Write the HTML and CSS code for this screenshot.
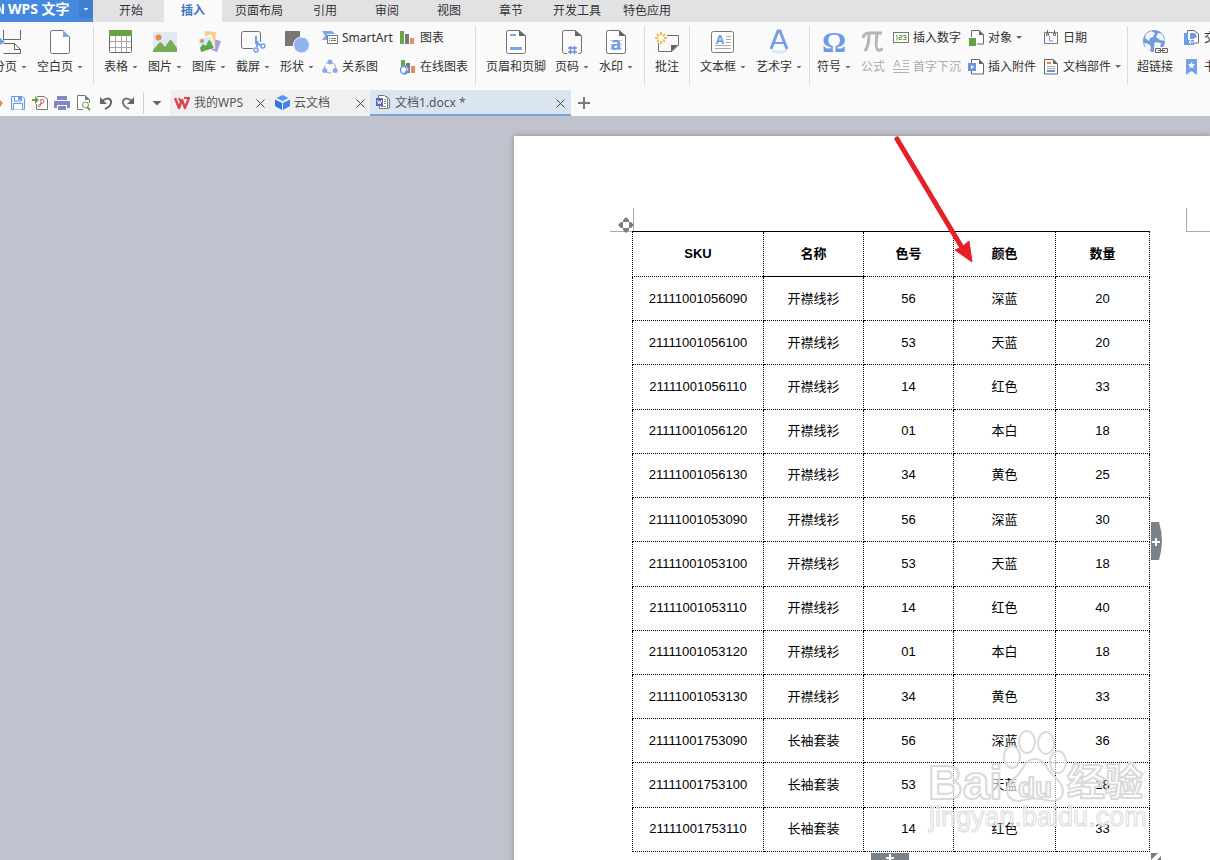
FILE: index.html
```html
<!DOCTYPE html>
<html lang="zh-CN">
<head>
<meta charset="utf-8">
<title>文档1.docx - WPS 文字</title>
<link rel="stylesheet" href="styles.css">
</head>
<body>
<div class="app">
  <header class="menu-bar">
    <button class="app-button"><svg class="app-logo" width="4" height="12" viewBox="0 0 4 12"><path d="M0 3l2 6V1h2v10H2L0 7z" fill="#fff"/></svg><span class="app-name">WPS 文字</span><span class="app-drop"><span class="caret caret-light"></span></span></button>
    <nav class="menu-tabs">
      <button class="menu-tab">开始</button>
      <button class="menu-tab is-active">插入</button>
      <button class="menu-tab">页面布局</button>
      <button class="menu-tab">引用</button>
      <button class="menu-tab">审阅</button>
      <button class="menu-tab">视图</button>
      <button class="menu-tab">章节</button>
      <button class="menu-tab">开发工具</button>
      <button class="menu-tab">特色应用</button>
    </nav>
  </header>

  <div class="ribbon">
    <section class="group group-pages">
      <button class="big"><svg class="icon" viewBox="0 0 28 28" fill="none" stroke="#666"><path d="M7.500 2V11.500H24.500V2M7.500 15.500H18.500L24.500 21.500V25.500H7.500M18.500 15.500V21.500H24.500"/><path d="M1 8l8 5.500L1 19z" fill="#6f9de8" stroke="none"/></svg><span class="label">分页<span class="caret"></span></span></button>
      <button class="big wide"><svg class="icon" viewBox="0 0 28 28"><path d="M17 2.500H6.500q-2 0-2 2v19q0 2 2 2h15q2 0 2-2V9" fill="#fff" stroke="#707070"/><path d="M17 2v7h7z" fill="#7ba3ea"/></svg><span class="label">空白页<span class="caret"></span></span></button>
    </section>

    <section class="group group-media">
      <button class="big"><svg class="icon" viewBox="0 0 28 28"><rect x="2.500" y="2.500" width="22" height="22" rx="1" fill="#fff" stroke="#666"/><path d="M2 2h23v6H2z" fill="#65a346"/><path d="M3 13.500h21M3 19.500h21M8.500 8v16M14.500 8v16M19.500 8v16" stroke="#a8a8a8"/></svg><span class="label">表格<span class="caret"></span></span></button>
      <button class="big"><svg class="icon" viewBox="0 0 28 28"><path d="M2 4h24v20H2z" fill="#e1e8ef"/><circle cx="7.500" cy="9.500" r="3" fill="#ec8a4b"/><path d="M2 24v-2l6-7q1.500-1.500 3 0l3 4 4-6q1.500-2 3 0l5 7v4z" fill="#77ae55"/></svg><span class="label">图片<span class="caret"></span></span></button>
      <button class="big"><svg class="icon" viewBox="0 0 28 28"><path d="M18 11l8 2-4 11-8-3z" fill="#a99be0"/><path d="M10 3l11 1-1 14-11-1z" fill="#f5cf85"/><path d="M2 11l14-4 4 13-14 4z" fill="#d7edfb" stroke="#fff"/><circle cx="7" cy="13" r="2" fill="#ed8c4c"/><path d="M5 20l3-4 3 2 2-5q2-2 3 1l3 6-13 4z" fill="#62a747"/></svg><span class="label">图库<span class="caret"></span></span></button>
      <button class="big"><svg class="icon" viewBox="0 0 28 28" fill="none"><path d="M14 20.500H4.500q-2 0-2-2v-13q0-2 2-2h15q2 0 2 2V14" stroke="#707070"/><path d="M17 8v7l5 2M18.500 13l-.5 6" stroke="#72a0e8" stroke-width="2"/><circle cx="17" cy="22" r="2" stroke="#72a0e8" stroke-width="1.500"/><circle cx="24" cy="18" r="2" stroke="#72a0e8" stroke-width="1.500"/></svg><span class="label">截屏<span class="caret"></span></span></button>
      <button class="big"><svg class="icon" viewBox="0 0 28 28"><path d="M2 3h15v15H2z" fill="#777"/><circle cx="18.500" cy="17" r="8" fill="#8fb4ee" stroke="#fafafa"/></svg><span class="label">形状<span class="caret"></span></span></button>
      <div class="stack">
        <button class="small"><svg class="icon-s" viewBox="0 0 16 16"><path d="M0 1h10l3 3H5v6H0l3-4z" fill="#7fa8e8"/><rect x="5.500" y="5.500" width="10" height="8" fill="#fff" stroke="#777"/><path d="M7 8.500h1M9 8.500h5M7 10.500h1M9 10.500h5" stroke="#777"/></svg>SmartArt</button>
        <button class="small"><svg class="icon-s" viewBox="0 0 16 16"><circle cx="8" cy="8.500" r="5.500" fill="none" stroke="#999" stroke-dasharray="5 2"/><circle cx="8" cy="3" r="2.500" fill="#82aaf0"/><circle cx="2.800" cy="11.500" r="2.500" fill="#82aaf0"/><circle cx="13.200" cy="11.500" r="2.500" fill="#82aaf0"/></svg>关系图</button>
      </div>
      <div class="stack">
        <button class="small"><svg class="icon-s" viewBox="0 0 16 16"><path d="M0 1h4v13H0z" fill="#69a34b"/><path d="M5 4h4v10H5z" fill="#777"/><path d="M10 8h4v6h-4z" fill="#ea8b57"/></svg>图表</button>
        <button class="small"><svg class="icon-s" viewBox="0 0 16 16"><path d="M1 1h4v8H1z" fill="#69a34b"/><path d="M6 4h4v10H6z" fill="#777"/><path d="M11 7h4v7h-4z" fill="#ea8b57"/><circle cx="4.500" cy="11" r="4" fill="#fff" stroke="#6495df" stroke-width="1.500"/><path d="M2 8q5 0 4 4l-2 1 1 2 3-2-2-5z" fill="#6495df"/></svg>在线图表</button>
      </div>
    </section>

    <section class="group group-header">
      <button class="big wider"><svg class="icon" viewBox="0 0 28 28"><path d="M17 2.500H6.500q-2 0-2 2v19q0 2 2 2h15q2 0 2-2V8z" fill="#fff" stroke="#707070"/><path d="M17 2v6h7z" fill="#666"/><path d="M8 6h6v2H8zM8 19h12v3H8z" fill="#7ba7e8"/></svg><span class="label">页眉和页脚</span></button>
      <button class="big"><svg class="icon" viewBox="0 0 28 28"><path d="M9 25.500H6.500q-2 0-2-2v-19q0-2 2-2H17L23.500 8v15.500q0 2-2 2H20" fill="none" stroke="#707070"/><path d="M17 2v6h7z" fill="#666"/><path d="M12.500 18v8M16.500 18v8M10 20h9M10 24h9" stroke="#668fe0" stroke-width="1.500"/></svg><span class="label">页码<span class="caret"></span></span></button>
      <button class="big"><svg class="icon" viewBox="0 0 28 28"><path d="M17 2.500H6.500q-2 0-2 2v19q0 2 2 2h15q2 0 2-2V8z" fill="#fff" stroke="#707070"/><path d="M17 2v6h7z" fill="#666"/><path d="M8 12.500h12M8 16.500h12M8 20.500h12" stroke="#aac6f2"/><text x="14" y="22" text-anchor="middle" class="glyph glyph-a">a</text></svg><span class="label">水印<span class="caret"></span></span></button>
    </section>

    <section class="group">
      <button class="big"><svg class="icon" viewBox="0 0 28 28"><path d="M14 7.500H25.500V17L19 23.500H5.500V15" fill="none" stroke="#707070"/><path d="M18 24v-7h7z" fill="#666"/><path d="M8 4v3M8 13v3M2 10h3M11 10h3M4 6l2 2M10 12l2 2M4 14l2-2M10 8l2-2" stroke="#f1bf4d" stroke-width="2"/></svg><span class="label">批注</span></button>
    </section>

    <section class="group group-text">
      <button class="big wide"><svg class="icon" viewBox="0 0 28 28"><rect x="2.500" y="3.500" width="22" height="21" rx="2" fill="#fff" stroke="#777"/><path d="M17 8.500h5M17 11.500h5M17 14.500h5M6 17.500h16M6 20.500h16" stroke="#aaa"/><text x="11" y="16" text-anchor="middle" class="glyph glyph-box">A</text></svg><span class="label">文本框<span class="caret"></span></span></button>
      <button class="big wide"><svg class="icon" viewBox="0 0 28 28"><path d="M6 21l7-18h2l7 18" fill="none" stroke="#759fe9" stroke-width="3"/><path d="M9 15h11" stroke="#759fe9" stroke-width="2"/><path d="M7 22q7 5 15 0" fill="none" stroke="#dbe7fc" stroke-width="3"/></svg><span class="label">艺术字<span class="caret"></span></span></button>
    </section>

    <section class="group group-symbol">
      <button class="big"><svg class="icon" viewBox="0 0 28 28"><text x="14" y="24" text-anchor="middle" class="glyph glyph-omega">Ω</text></svg><span class="label">符号<span class="caret"></span></span></button>
      <button class="big narrow" disabled><svg class="icon" viewBox="0 0 28 28"><path d="M4 10q1-5 6-5h13M10 6q0 12-4 17M18 6q-2 15 1 16 3 1 4-2" fill="none" stroke="#b5b5b5" stroke-width="3"/></svg><span class="label">公式</span></button>
      <div class="stack">
        <button class="small"><svg class="icon-s" viewBox="0 0 16 16"><rect x=".5" y="2.500" width="15" height="10" fill="#fff" stroke="#777"/><path d="M3 5.500h1v5M6 5.500h3v2H6v2h3M10 5.500h3v4h-3M11 7.500h2" fill="none" stroke="#69a34b"/></svg>插入数字</button>
        <button class="small" disabled><svg class="icon-s" viewBox="0 0 16 16" fill="none" stroke="#b3b3b3"><path d="M10 1.500h6M10 4.500h6M10 7.500h6M0 10.500h16M0 13.500h16M1 8l3-7 3 7M2 6h4"/></svg>首字下沉</button>
      </div>
      <div class="stack">
        <button class="small"><svg class="icon-s" viewBox="0 0 16 16"><path d="M3.500 7V.5H11L15.500 5v9H9" fill="#fff" stroke="#666"/><path d="M11 0v5h5z" fill="#666"/><path d="M1 8h7v8H1z" fill="#61a342"/></svg>对象<span class="caret"></span></button>
        <button class="small"><svg class="icon-s" viewBox="0 0 16 16"><path d="M3.500 4V.5H11L15.500 5v10h-12v-3" fill="#fff" stroke="#666"/><path d="M11 0v5h5z" fill="#666"/><path d="M0 4h8v8H0z" fill="#6796df"/><path d="M3 6l3 2-3 2z" fill="#fff"/></svg>插入附件</button>
      </div>
      <div class="stack">
        <button class="small"><svg class="icon-s" viewBox="0 0 16 16"><path d="M1.500 2.500h2v3h2v-3h5v3h2v-3h2v11h-13z" fill="#fff" stroke="#777"/><path d="M4.500 0v4M11.500 0v4" stroke="#666"/><path d="M6.500 6v5h4" fill="none" stroke="#6897df"/></svg>日期</button>
        <button class="small"><svg class="icon-s" viewBox="0 0 16 16"><path d="M1.500.5H10L14.500 5v10h-13z" fill="#fff" stroke="#666"/><path d="M10 0v5h5z" fill="#666"/><path d="M4 3h4v2H4z" fill="#e98951"/><path d="M4 7.500h8M4 9.500h8" stroke="#aaa"/><path d="M4 11h8v2H4z" fill="#668fe0"/></svg>文档部件<span class="caret"></span></button>
      </div>
    </section>

    <section class="group group-links">
      <button class="big link"><svg class="icon" viewBox="0 0 28 28"><circle cx="13" cy="13" r="11" fill="#719bd9"/><path d="M5 6l5-3 4 2-2 4-3 1-1 3-4-3zM17 5l4 1 3 7-5-1-4-3zM3 15l5 1 2 3-1 5-4-3zM14 14l6 1-1 5-4 2-2-4z" fill="#f1f6fc"/><path d="M13 19h14v8H13z" fill="#fafafa"/><path d="M14.500 20.500h5v4h-5zM21.500 20.500h5v4h-5zM17 22.500h7" fill="none" stroke="#666"/></svg><span class="label">超链接</span></button>
      <div class="stack">
        <button class="small"><svg class="icon-s" viewBox="0 0 16 16"><path d="M3.500.5H10L14.500 4v9h-11z" fill="#fff" stroke="#666"/><path d="M0 3h4v7h6v5H0z" fill="#6f9bea"/><path d="M6 3h5l2 4-4 2H6z" fill="#6f9bea"/><path d="M10 12H5m2-2l-2 2 2 2" fill="none" stroke="#fff"/></svg>交叉引用</button>
        <button class="small"><svg class="icon-s" viewBox="0 0 16 16"><path d="M2 1q0-1 1-1h9q1 0 1 1v15l-5.500-4L2 16z" fill="#759eea"/><path d="M7.500 3l1 2 2.500.2-2 1.700.7 2.500-2.200-1.300-2.200 1.300.7-2.500-2-1.700L6.500 5z" fill="#fff"/></svg>书签</button>
      </div>
    </section>
  </div>

  <div class="doc-bar">
    <div class="quick">
      <button class="quick-first" aria-label="打开"><svg width="7" height="16" viewBox="0 0 7 16"><path d="M0 5l3 3-3 4z" fill="#ea8a41"/></svg></button>
      <button class="quick-button" aria-label="保存"><svg class="icon-s" viewBox="0 0 16 16"><path d="M1.500 1.500h11l2 2v11h-13z" fill="#e8f0fd" stroke="#6d99e3"/><path d="M4.500 2v4h7V2M3.500 14.500v-6h9v6" fill="#fff" stroke="#6d99e3"/><path d="M8 2h3v3H8z" fill="#6d99e3"/></svg></button>
      <button class="quick-button" aria-label="输出为PDF"><svg class="icon-s" viewBox="0 0 16 16"><path d="M4.500 9v5.500h11V4L12 1.500H5" fill="#fff" stroke="#777"/><path d="M0 4h3V1l4 4-4 4V6H0z" fill="#68a149"/><path d="M8 5q4-2 4 1t-4 3q-3 2-1 3 2 0 2-7" fill="none" stroke="#d75b5b"/></svg></button>
      <button class="quick-button" aria-label="打印"><svg class="icon-s" viewBox="0 0 16 16"><path d="M3 1h10v4H3zM0 6h16v7h-3v-3H3v3H0zM4 11h8v4H4z" fill="#8487be"/></svg></button>
      <button class="quick-button" aria-label="打印预览"><svg class="icon-s" viewBox="0 0 16 16"><path d="M7 14.500H1.500V.5H9L13.500 5v3" fill="#fff" stroke="#777"/><path d="M9 0v5h5z" fill="#777"/><circle cx="9.500" cy="10" r="3" fill="none" stroke="#68a149"/><path d="M11 12l3 3" stroke="#68a149" stroke-width="2"/></svg></button>
      <button class="quick-button" aria-label="撤销"><svg class="icon-s" viewBox="0 0 16 16"><path d="M4 6q7-5 9 0 1 5-6 8" fill="none" stroke="#666" stroke-width="2"/><path d="M2 2v7h7z" fill="#666"/></svg></button>
      <button class="quick-button" aria-label="恢复"><svg class="icon-s" viewBox="0 0 16 16"><path d="M12 6Q5 1 3 6q-1 5 6 8" fill="none" stroke="#777" stroke-width="2"/><path d="M14 2v7H7z" fill="#666"/></svg></button>
      <button class="quick-more" aria-label="自定义"><span class="caret caret-large"></span></button>
    </div>
    <div class="doc-tab"><svg class="icon-s" viewBox="0 0 16 16"><path d="M1 3l4 10L8 5l3 8 4-10" fill="none" stroke="#d84850" stroke-width="2.500" stroke-linejoin="round"/><path d="M5 3l2 5M10 3h6" stroke="#d84850" stroke-width="2"/></svg><span class="doc-name">我的WPS</span><button class="close" aria-label="关闭"><svg width="9" height="9" viewBox="0 0 9 9"><path d="M.5.5l8 8M8.500.5l-8 8" stroke="#444"/></svg></button></div>
    <div class="doc-tab"><svg class="icon-s" viewBox="0 0 16 16"><path d="M8.500 0l6 3-6 3-6-3z" fill="#5794f3"/><path d="M1 4.500l7 3.500v7l-7-4z" fill="#3775e5"/><path d="M16 4.500L9 8v7l7-4z" fill="#4483ec"/></svg><span class="doc-name">云文档</span><button class="close" aria-label="关闭"><svg width="9" height="9" viewBox="0 0 9 9"><path d="M.5.5l8 8M8.500.5l-8 8" stroke="#444"/></svg></button></div>
    <div class="doc-tab is-current"><svg class="icon-s" viewBox="0 0 16 16"><path d="M5.500 3V1.500h6L14.500 4v9h-4" fill="#eef3f9" stroke="#777"/><path d="M3.500 3V.5h6l3 3v10h-8V11" fill="#fff" stroke="#777"/><path d="M9 4.500h2M9 6.500h2M9 8.500h2M6 11.500h5" stroke="#888"/><path d="M1 3h7v8H1z" fill="#5666b1"/><path d="M2.500 5l1 4 1-3 1 3 1-4" fill="none" stroke="#fff"/></svg><span class="doc-name">文档1.docx *</span><button class="close" aria-label="关闭"><svg width="9" height="9" viewBox="0 0 9 9"><path d="M.5.5l8 8M8.500.5l-8 8" stroke="#444"/></svg></button></div>
    <button class="new-tab" aria-label="新建"><svg width="12" height="12" viewBox="0 0 12 12"><path d="M6 0v12M0 6h12" stroke="#777" stroke-width="2"/></svg></button>
  </div>

  <main class="workspace">
    <article class="page">
      <span class="crop-mark crop-left"></span>
      <span class="crop-mark crop-right"></span>
      <div class="table-wrap">
        <svg class="move-handle" width="16" height="16" viewBox="0 0 16 16"><path d="M8 0l3 3v2H5V3zM8 16l3-3v-2H5v2zM0 8l3-3h2v6H3zM16 8l-3-3h-2v6h2z" fill="#757c82"/></svg>
        <table class="stock">
          <colgroup><col class="c-sku"><col class="c-name"><col class="c-code"><col class="c-color"><col class="c-qty"></colgroup>
          <thead><tr><th>SKU</th><th class="underlined">名称</th><th>色号</th><th>颜色</th><th>数量</th></tr></thead>
          <tbody>
            <tr><td>21111001056090</td><td>开襟线衫</td><td>56</td><td>深蓝</td><td>20</td></tr>
            <tr><td>21111001056100</td><td>开襟线衫</td><td>53</td><td>天蓝</td><td>20</td></tr>
            <tr><td>21111001056110</td><td>开襟线衫</td><td>14</td><td>红色</td><td>33</td></tr>
            <tr><td>21111001056120</td><td>开襟线衫</td><td>01</td><td>本白</td><td>18</td></tr>
            <tr><td>21111001056130</td><td>开襟线衫</td><td>34</td><td>黄色</td><td>25</td></tr>
            <tr><td>21111001053090</td><td>开襟线衫</td><td>56</td><td>深蓝</td><td>30</td></tr>
            <tr><td>21111001053100</td><td>开襟线衫</td><td>53</td><td>天蓝</td><td>18</td></tr>
            <tr><td>21111001053110</td><td>开襟线衫</td><td>14</td><td>红色</td><td>40</td></tr>
            <tr><td>21111001053120</td><td>开襟线衫</td><td>01</td><td>本白</td><td>18</td></tr>
            <tr><td>21111001053130</td><td>开襟线衫</td><td>34</td><td>黄色</td><td>33</td></tr>
            <tr><td>21111001753090</td><td>长袖套装</td><td>56</td><td>深蓝</td><td>36</td></tr>
            <tr><td>21111001753100</td><td>长袖套装</td><td>53</td><td>天蓝</td><td>18</td></tr>
            <tr><td>21111001753110</td><td>长袖套装</td><td>14</td><td>红色</td><td>33</td></tr>
          </tbody>
        </table>
        <svg class="add-column" width="12" height="38" viewBox="0 0 12 38"><path d="M0 0h8q3 10 3 19t-3 19H0z" fill="#7a828a"/><path d="M1 20h8M5 16v8" stroke="#fff" stroke-width="2"/></svg>
        <svg class="add-row" width="38" height="12" viewBox="0 0 38 12"><path d="M0 0h38v8q-10 3-19 3T0 8z" fill="#7a828a"/><path d="M15 5h8M19 1v8" stroke="#fff" stroke-width="2"/></svg>
        <svg class="resize-handle" width="10" height="10" viewBox="0 0 10 10"><path d="M0 0h7L0 7zM10 3v7H3z" fill="#757c82"/></svg>
      </div>
      <svg class="arrow" width="80" height="130" viewBox="0 0 80 130"><path d="M3 3L67 110" stroke="#e71f28" stroke-width="5" stroke-linecap="round"/><path d="M78 126L61 114l7-3 7-6z" fill="#e71f28" stroke="#e71f28"/></svg>
      <svg class="watermark" width="224" height="112" viewBox="0 0 224 112">
        <text x="4" y="74" class="wm-latin">Bai</text>
        <ellipse cx="88" cy="32" rx="8" ry="11"/>
        <ellipse cx="103" cy="17" rx="8" ry="11"/>
        <ellipse cx="122" cy="18" rx="8" ry="11"/>
        <ellipse cx="134" cy="37" rx="8" ry="11"/>
        <path d="M111 34q-8 0-12 9-4 7-11 12-8 9-3 17 6 6 15 3 11-3 22 0 11 3 16-4 3-9-5-17-6-5-10-11-4-9-12-9z"/>
        <text x="94" y="72" class="wm-du">du</text>
        <text x="143" y="70" class="wm-cjk">经验</text>
        <text x="5" y="101" class="wm-url">jingyan.baidu.com</text>
      </svg>
    </article>
  </main>
</div>
</body>
</html>
```
FILE: styles.css
```css
* { box-sizing: border-box; }

body {
  margin: 0;
  font: 12px/16px "Noto Sans", "Noto Sans CJK SC", sans-serif;
  color: #333;
}

button {
  margin: 0;
  padding: 0;
  border: 0;
  background: none;
  font: inherit;
  color: inherit;
  white-space: nowrap;
}

button:disabled { color: #aaa; }
svg { display: block; flex: none; }

.app {
  display: flex;
  flex-direction: column;
  height: 100vh;
  overflow: hidden;
  background: #fafafa;
}

.caret {
  flex: none;
  width: 6px;
  height: 3px;
  background: #666;
  clip-path: polygon(0 0, 100% 0, 50% 100%);
}
.caret-light { background: #fff; }
.caret-large { width: 10px; height: 5px; }

/* Menu bar */
.menu-bar {
  display: flex;
  flex: none;
  height: 22px;
  background: #e2e2e4;
}
.app-button {
  display: flex;
  align-items: center;
  width: 93px;
  padding-bottom: 4px;
  background: #4489dd;
  color: #fff;
  font-size: 14px;
  font-weight: bold;
}
.app-name { flex: 1; padding-left: 4px; text-align: left; }
.app-drop {
  display: flex;
  align-items: center;
  justify-content: center;
  width: 14px;
  height: 18px;
  background: #3f7fd2;
}
.menu-tabs { display: flex; padding-left: 7px; }
.menu-tab {
  min-width: 62px;
  padding: 0 11px;
}
.menu-tab.is-active {
  min-width: 58px;
  margin: 0 2px;
  background: #fafafa;
  color: #3f76bd;
  font-weight: bold;
}

/* Ribbon */
.ribbon {
  display: flex;
  flex: none;
  height: 68px;
  padding-top: 4px;
  overflow: hidden;
}
.group {
  display: flex;
  flex: none;
  height: 59px;
  border-right: 1px solid #dcdcdc;
}
.group-pages { justify-content: flex-end; width: 94px; padding-right: 5px; }
.group-media { padding-left: 5px; }
.group-header { padding: 0 6px; }
.group-text { height: 59px; padding: 0 2px 0 5px; }
.group-symbol { padding: 0 2px; }
.group-links { padding-left: 1px; border-right: 0; }

.big {
  display: flex;
  flex: none;
  flex-direction: column;
  align-items: center;
  gap: 3px;
  width: 44px;
  height: 50px;
  padding-top: 2px;
}
.wide { width: 56px; }
.wider { width: 68px; }
.narrow { width: 34px; }
.link { width: 52px; }
.icon { width: 28px; height: 28px; }
.icon-s { width: 16px; height: 16px; }
.label { display: flex; align-items: center; gap: 4px; }

.stack {
  display: flex;
  flex-direction: column;
  height: 58px;
  margin-top: -3px;
}
.small {
  display: flex;
  flex: 1;
  align-items: center;
  gap: 4px;
  min-width: 74px;
  padding: 0 4px 0 3px;
}
.group-media .small { min-width: 78px; }

.glyph { fill: #6e9be6; font-weight: bold; }
.glyph-a { font-size: 18px; }
.glyph-box { font-size: 12px; }
.glyph-omega { font-family: "Liberation Serif", serif; font-size: 30px; }

/* Quick access and document tabs */
.doc-bar { display: flex; flex: none; height: 26px; }
.quick { display: flex; align-items: center; }
.quick-first { width: 7px; }
.quick-button {
  display: flex;
  justify-content: center;
  width: 22px;
}
.quick-more {
  display: flex;
  align-items: center;
  justify-content: center;
  width: 27px;
  height: 22px;
  margin-left: 4px;
  border-left: 1px solid #d0d0d0;
}
.doc-tab {
  display: flex;
  align-items: center;
  gap: 4px;
  width: 100px;
  padding: 0 5px 0 4px;
  background: #f0f0f1;
  color: #555;
}
.doc-tab.is-current {
  width: 201px;
  padding: 2px 6px 0 5px;
  background: #dbe5f1;
  border-bottom: 2px solid #78a3d8;
}
.doc-name { flex: 1; }
.new-tab {
  display: flex;
  align-items: center;
  justify-content: center;
  width: 26px;
}

/* Document */
.workspace {
  display: flex;
  flex: 1;
  min-height: 0;
  padding: 20px 0 0 514px;
  overflow: hidden;
  background: #c0c3cd;
}
.page {
  position: relative;
  flex: 1;
  height: 900px;
  padding: 95px 0 0 118px;
  background: #fff;
  box-shadow: 0 0 6px #888a92;
}
.crop-mark {
  position: absolute;
  top: 72px;
  width: 24px;
  height: 24px;
  border-bottom: 1px solid #aaa;
}
.crop-left { left: 96px; border-right: 1px solid #aaa; }
.crop-right { right: 0; border-left: 1px solid #aaa; }

.table-wrap { position: relative; width: 518px; }
.move-handle { position: absolute; top: -14px; left: -14px; }
.add-column { position: absolute; top: 291px; right: -13px; }
.add-row { position: absolute; top: 622px; left: 239px; }
.resize-handle { position: absolute; top: 622px; right: -11px; }

.stock {
  width: 518px;
  height: 621px;
  table-layout: fixed;
  border-collapse: collapse;
  font: 13px/16px "Liberation Sans", "Noto Sans CJK SC", sans-serif;
  color: #000;
  text-align: center;
}
.stock th, .stock td { padding: 0; border: 1px dotted #000; }
.stock th { height: 45px; border-top: 1px solid #000; }
.stock th.underlined { border-bottom: 1px solid #000; }
.c-sku { width: 131px; }
.c-name { width: 100px; }
.c-code { width: 90px; }
.c-color { width: 102px; }
.c-qty { width: 94px; }

.arrow { position: absolute; top: 0; left: 380px; }

.watermark {
  position: absolute;
  top: 589px;
  left: 410px;
  font-family: "Liberation Sans", "Noto Sans CJK SC", sans-serif;
  font-weight: bold;
  fill: rgba(255, 255, 255, 0.6);
  stroke: #dadada;
  stroke-width: 2px;
}
.wm-latin { font-size: 48px; }
.wm-du { font-size: 28px; }
.wm-cjk { font-size: 38px; }
.wm-url { font-size: 27px; font-weight: normal; stroke-width: 1px; }
```
